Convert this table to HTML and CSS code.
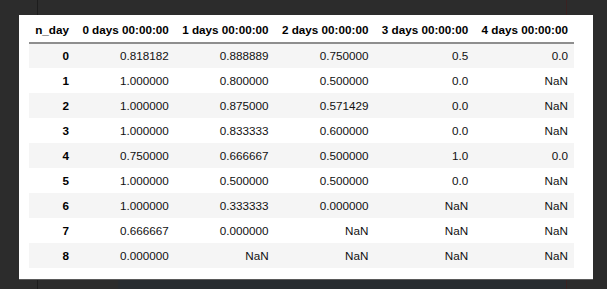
FILE: index.html
```html
<!DOCTYPE html>
<html>
<head>
<meta charset="utf-8">
<link rel="stylesheet" href="styles.css">
</head>
<body>
<div class="panel">
  <table class="df">
    <thead>
      <tr>
        <th class="idx">n_day</th>
        <th>0 days 00:00:00</th>
        <th>1 days 00:00:00</th>
        <th>2 days 00:00:00</th>
        <th>3 days 00:00:00</th>
        <th>4 days 00:00:00</th>
      </tr>
    </thead>
    <tbody>
      <tr><th>0</th><td>0.818182</td><td>0.888889</td><td>0.750000</td><td>0.5</td><td>0.0</td></tr>
      <tr><th>1</th><td>1.000000</td><td>0.800000</td><td>0.500000</td><td>0.0</td><td>NaN</td></tr>
      <tr><th>2</th><td>1.000000</td><td>0.875000</td><td>0.571429</td><td>0.0</td><td>NaN</td></tr>
      <tr><th>3</th><td>1.000000</td><td>0.833333</td><td>0.600000</td><td>0.0</td><td>NaN</td></tr>
      <tr><th>4</th><td>0.750000</td><td>0.666667</td><td>0.500000</td><td>1.0</td><td>0.0</td></tr>
      <tr><th>5</th><td>1.000000</td><td>0.500000</td><td>0.500000</td><td>0.0</td><td>NaN</td></tr>
      <tr><th>6</th><td>1.000000</td><td>0.333333</td><td>0.000000</td><td>NaN</td><td>NaN</td></tr>
      <tr><th>7</th><td>0.666667</td><td>0.000000</td><td>NaN</td><td>NaN</td><td>NaN</td></tr>
      <tr><th>8</th><td>0.000000</td><td>NaN</td><td>NaN</td><td>NaN</td><td>NaN</td></tr>
    </tbody>
  </table>
</div>
<div class="strip"></div>
</body>
</html>
```
FILE: styles.css
```css
html, body {
  margin: 0;
  padding: 0;
}
body {
  height: 289px;
  overflow: hidden;
  padding-top: 15px;
  box-sizing: border-box;
  background:
    linear-gradient(to right, transparent 37px, #1d1d1d 37px, #1d1d1d 38px, transparent 38px),
    linear-gradient(to right, transparent 566px, #3a2222 566px, #3a2222 567px, transparent 567px),
    #2c2c2c;
  font-family: "Liberation Sans", Arial, sans-serif;
}
.panel {
  margin-left: 19px;
  width: 574px;
  height: 265px;
  box-sizing: border-box;
  padding: 3px 0 0 10px;
  background: #ffffff;
  border-bottom: 1px solid #5a5a5a;
}
.df {
  width: 545px;
  border-collapse: collapse;
  table-layout: fixed;
  font-size: 11.7px;
  color: #000;
}
.df th, .df td {
  height: 25px;
  padding: 0 6px;
  text-align: right;
  white-space: nowrap;
  box-sizing: border-box;
  line-height: 14px;
  overflow: visible;
}
.df th {
  font-weight: bold;
}
.df thead th {
  width: 99.8px;
  border-bottom: 2px solid #8e8e8e;
}
.df thead th.idx {
  width: 46px;
}
.df td {
  color: #111;
}
.df tbody tr:nth-child(odd) {
  background: #f5f5f5;
}
.strip {
  margin-left: 118px;
  width: 448px;
  height: 20px;
  background: #282c30;
}
```
